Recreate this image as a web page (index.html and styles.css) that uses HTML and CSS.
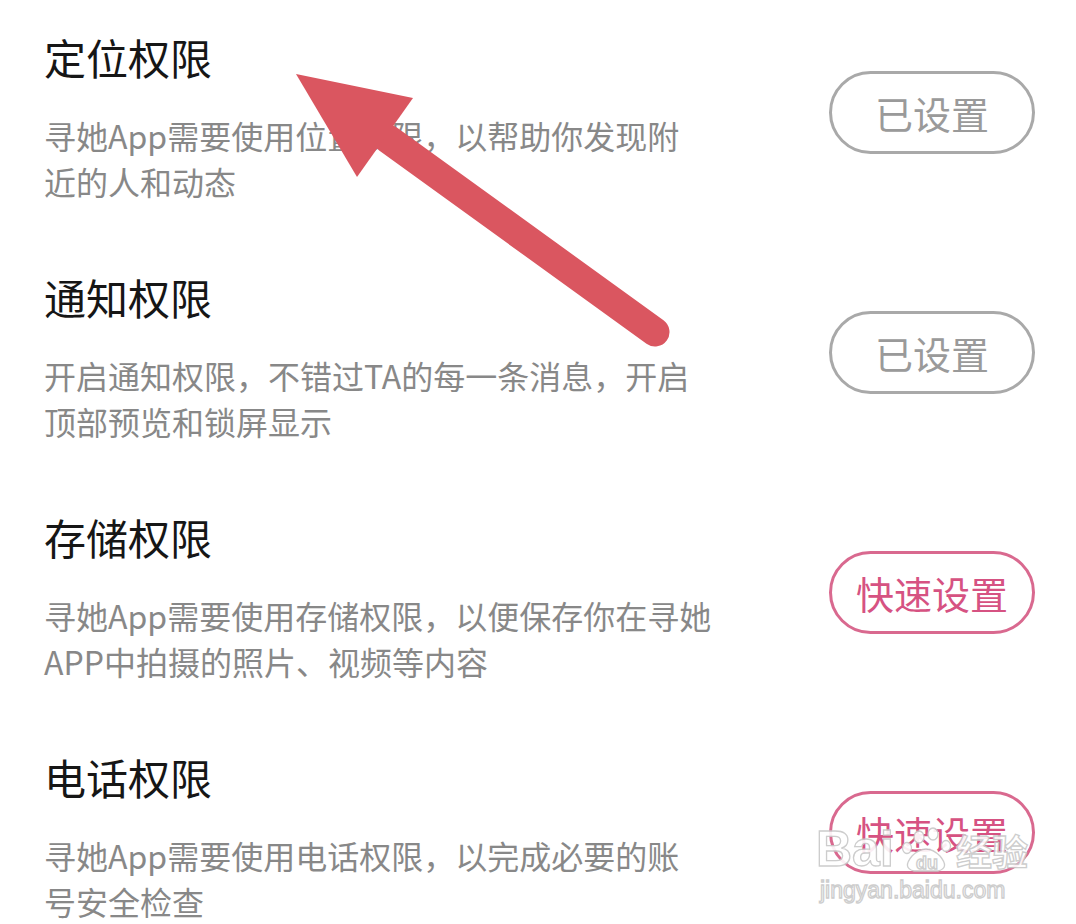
FILE: index.html
```html
<!DOCTYPE html>
<html lang="zh-CN">
<head>
    <meta charset="UTF-8">
    <meta name="viewport" content="width=device-width, initial-scale=1.0">
    <title>权限设置</title>
    <link rel="stylesheet" href="styles.css">
</head>
<body>

    <div class="screen">

        <!-- Permission list -->
        <ul class="perm-list">
            <li class="perm-item">
                <div class="perm-text">
                    <h2>定位权限</h2>
                    <p>寻她App需要使用位置权限，以帮助你发现附<br>近的人和动态</p>
                </div>
                <button class="perm-btn done">已设置</button>
            </li>
            <li class="perm-item">
                <div class="perm-text">
                    <h2>通知权限</h2>
                    <p>开启通知权限，不错过TA的每一条消息，开启<br>顶部预览和锁屏显示</p>
                </div>
                <button class="perm-btn done">已设置</button>
            </li>
            <li class="perm-item">
                <div class="perm-text">
                    <h2>存储权限</h2>
                    <p>寻她App需要使用存储权限，以便保存你在寻她<br>APP中拍摄的照片、视频等内容</p>
                </div>
                <button class="perm-btn quick">快速设置</button>
            </li>
            <li class="perm-item">
                <div class="perm-text">
                    <h2>电话权限</h2>
                    <p>寻她App需要使用电话权限，以完成必要的账<br>号安全检查</p>
                </div>
                <button class="perm-btn quick">快速设置</button>
            </li>
        </ul>

        <!-- Annotation arrow -->
        <svg class="arrow" viewBox="0 0 1076 924" width="1076" height="924">
            <line x1="388" y1="139" x2="655" y2="332" stroke="#da5660" stroke-width="29" stroke-linecap="round"/>
            <polygon points="296,74 413,98 357,177" fill="#da5660"/>
        </svg>

        <!-- Watermark -->
        <svg class="watermark" viewBox="0 0 240 90" width="240" height="90">
            <g fill="#fff" stroke="#c8c8c8" stroke-width="1.3">
                <text x="2" y="44" class="wm-big">Bai</text>
                <ellipse cx="105" cy="15" rx="5" ry="6"/>
                <ellipse cx="119" cy="12" rx="5" ry="6"/>
                <ellipse cx="93" cy="26" rx="4.5" ry="5.5"/>
                <ellipse cx="132" cy="24" rx="4.5" ry="5.5"/>
                <path d="M98 34 Q112 20 126 34 Q136 46 124 49 L100 49 Q88 46 98 34 Z"/>
                <text x="102" y="47" class="wm-du">du</text>
                <text x="142" y="44" class="wm-cn">经验</text>
                <text x="6" y="76" class="wm-url">jingyan.baidu.com</text>
            </g>
        </svg>

    </div>

</body>
</html>
```

FILE: styles.css
```css
html, body {
    margin: 0;
    padding: 0;
    background-color: #ffffff;
    overflow: hidden;
}

body {
    font-family: "Noto Sans CJK SC", "Noto Sans", sans-serif;
    color: #1a1a1a;
}

.screen {
    position: relative;
    width: 1076px;
    height: 924px;
}

/* Permission list */
.perm-list {
    list-style: none;
    margin: 0;
    padding: 20px 41px 0 44px;
}

.perm-item {
    display: flex;
    align-items: center;
    justify-content: space-between;
    margin-bottom: 56px;
}

.perm-text h2 {
    margin: 0;
    font-size: 42px;
    font-weight: 400;
    line-height: 74px;
    color: #161616;
}

.perm-text p {
    margin: 18px 0 0;
    font-size: 32px;
    line-height: 46px;
    color: #888888;
}

.perm-btn {
    width: 206px;
    height: 83px;
    border-radius: 42px;
    background: #ffffff;
    font-family: inherit;
    font-size: 38px;
    padding: 0;
    cursor: pointer;
}

.perm-btn.done {
    border: 3px solid #a9a9a9;
    color: #9a9a9a;
}

.perm-btn.quick {
    border: 3px solid #d9698f;
    color: #d65282;
}

/* Overlays */
.arrow {
    position: absolute;
    left: 0;
    top: 0;
    pointer-events: none;
}

.watermark {
    position: absolute;
    left: 814px;
    top: 822px;
    opacity: 0.9;
    pointer-events: none;
}

.wm-big {
    font-family: "Liberation Sans", Arial, sans-serif;
    font-size: 50px;
    font-weight: 700;
}

.wm-du {
    font-family: "Liberation Sans", Arial, sans-serif;
    font-size: 18px;
    font-weight: 700;
}

.wm-cn {
    font-family: "Noto Sans CJK SC", sans-serif;
    font-size: 36px;
    font-weight: 700;
}

.wm-url {
    font-family: "Liberation Sans", Arial, sans-serif;
    font-size: 23px;
}
```
